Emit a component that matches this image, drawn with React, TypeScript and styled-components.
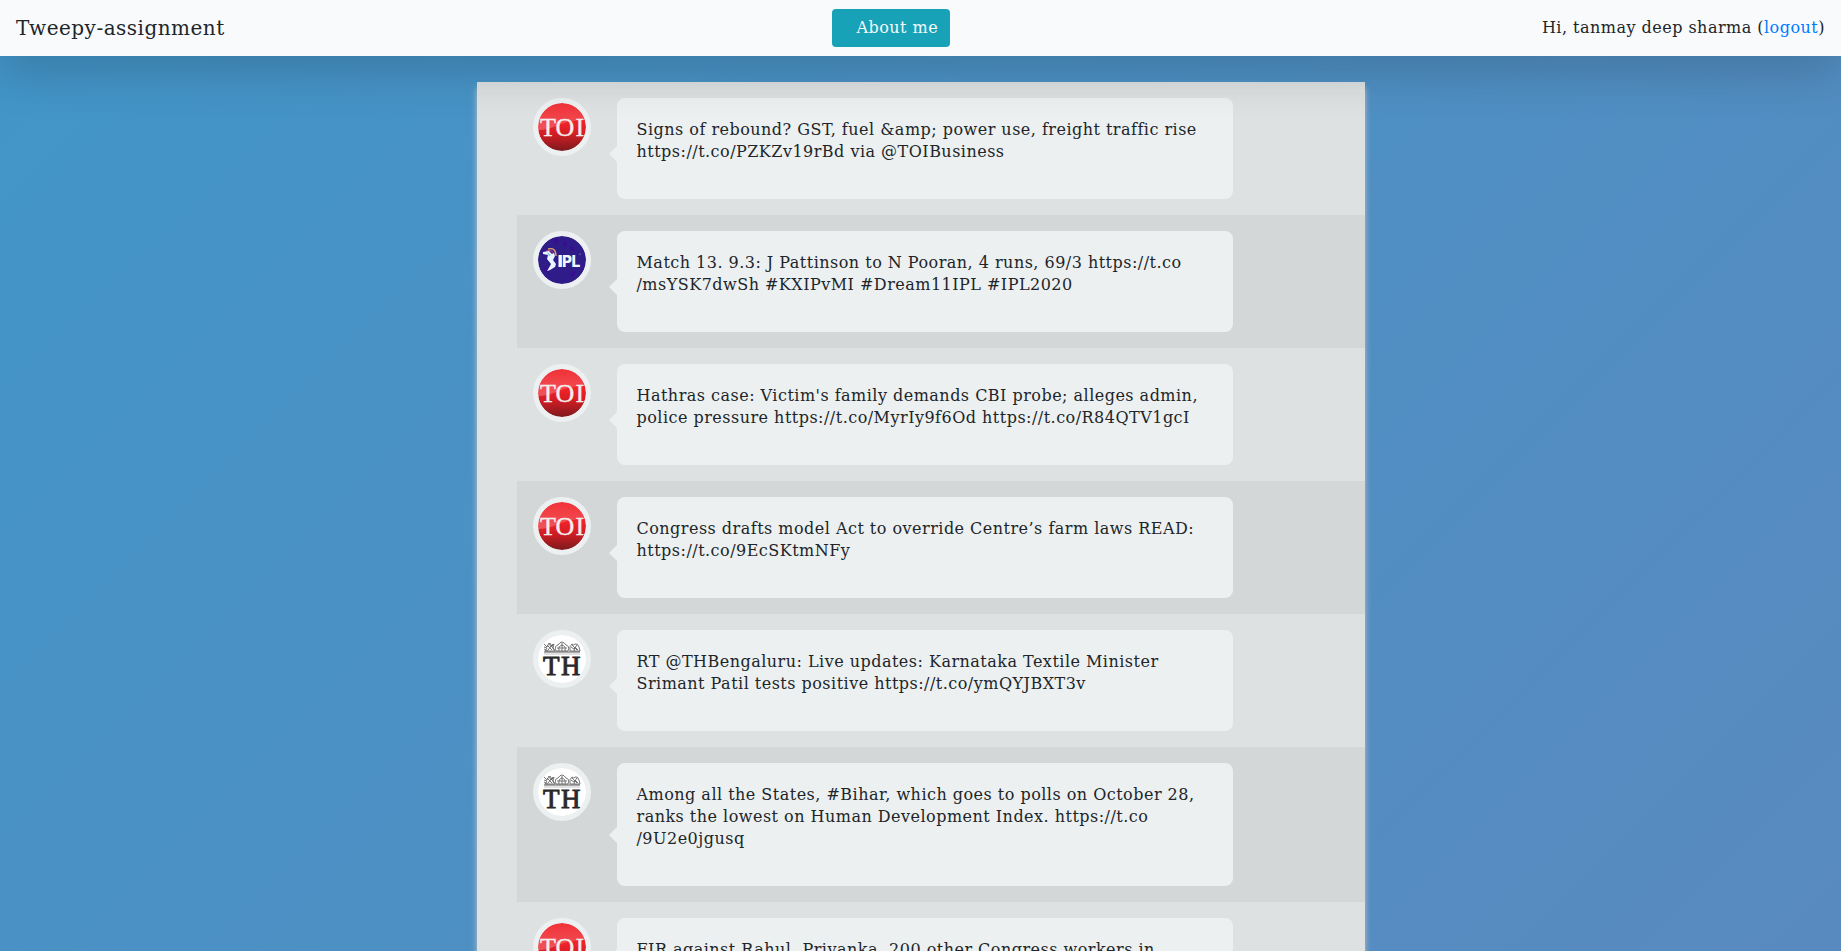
import React from 'react';
import styled, { createGlobalStyle } from 'styled-components';

const GlobalStyle = createGlobalStyle`
  *, *::before, *::after { box-sizing: border-box; }
  html { min-height: 100%; }
  body {
    margin: 0;
    min-height: 100vh;
    font-family: "DejaVu Serif", serif;
    font-size: 16px;
    line-height: 22px;
    letter-spacing: 0.03em;
    color: #212529;
    background: linear-gradient(135deg, #4295c8 0%, #598abf 100%) fixed;
  }
`;

const Navbar = styled.nav`
  position: sticky;
  top: 0;
  z-index: 10;
  display: flex;
  align-items: center;
  justify-content: space-between;
  min-height: 56px;
  padding: 8px 16px;
  line-height: 24px;
  background: #f8fafc;
  box-shadow: 0 16px 48px rgba(0, 0, 0, 0.175);
`;

const Brand = styled.a`
  margin-right: 16px;
  font-size: 20px;
  line-height: 30px;
  color: #212529;
  text-decoration: none;
  white-space: nowrap;
`;

const AboutButton = styled.button`
  padding: 7px 12px 7px 24px;
  border: 0;
  border-radius: 4px;
  background: #17a2b8;
  color: #f8fafc;
  font: inherit;
  letter-spacing: inherit;
  white-space: nowrap;
  cursor: pointer;
`;

const Greeting = styled.span`
  text-align: right;
`;

const LogoutLink = styled.a`
  color: #007bff;
  text-decoration: none;
`;

const Feed = styled.main`
  max-width: 888px;
  margin: 26px auto 0;
  padding-left: 40px;
  background: #dde1e2;
  box-shadow: 0 6px 6px #bdc3c7;
`;

const TweetList = styled.ul`
  margin: 0;
  padding: 0;
  list-style: none;
`;

const TweetRow = styled.li`
  display: flex;
  align-items: flex-start;
  gap: 26px;
  padding: 16px;

  &:nth-child(even) { background: #d3d7d8; }
`;

const Avatar = styled.svg`
  flex: none;
  width: 58px;
  height: 58px;
  border: 5px solid #ecf0f1;
  border-radius: 50%;
  background: #ecf0f1;
`;

const Bubble = styled.p`
  position: relative;
  flex: 1;
  min-width: 0;
  max-width: 616px;
  margin: 0;
  padding: 21px 20px 36px;
  border-radius: 8px;
  background: #ecf0f1;
  overflow-wrap: break-word;

  &::before {
    content: "";
    position: absolute;
    top: calc(75% - 28px);
    right: 100%;
    border: 8px solid transparent;
    border-left-width: 0;
    border-right-color: #ecf0f1;
  }
`;

const UrlPart = styled.span`
  white-space: nowrap;
`;

type Source = 'toi' | 'ipl' | 'hindu';

function ToiLogo() {
  return (
    <Avatar viewBox="0 0 48 48" role="img" aria-label="Times of India">
      <defs>
        <linearGradient id="toi-red" x1="0" y1="0" x2="0" y2="1">
          <stop offset="0" stopColor="#f0292f" />
          <stop offset="0.45" stopColor="#ee2229" />
          <stop offset="0.62" stopColor="#d81d24" />
          <stop offset="1" stopColor="#7d1a1d" />
        </linearGradient>
        <linearGradient id="toi-shine" x1="0" y1="0" x2="0" y2="1">
          <stop offset="0" stopColor="#fff" stopOpacity="0.04" />
          <stop offset="1" stopColor="#fff" stopOpacity="0.24" />
        </linearGradient>
        <clipPath id="toi-clip"><circle cx="24" cy="24" r="24" /></clipPath>
      </defs>
      <g clipPath="url(#toi-clip)">
        <rect width="48" height="48" fill="url(#toi-red)" />
        <path d="M0 0H48V17Q30 17 18 23Q9 27 0 27Z" fill="url(#toi-shine)" />
        <g fontFamily="Liberation Serif" fontSize="26" letterSpacing="0" fill="#f3eeee" stroke="#f3eeee" strokeWidth="0.4">
          <text x="2" y="33">T</text>
          <text x="17.5" y="33">O</text>
          <text x="37.5" y="33">I</text>
        </g>
      </g>
    </Avatar>
  );
}

function IplLogo() {
  return (
    <Avatar viewBox="0 0 48 48" role="img" aria-label="Indian Premier League">
      <circle cx="24" cy="24" r="24" fill="#2f1c88" />
      <g fill="#3f0597" opacity="0.7">
        <path d="M15 3l4-1 1 5-3 2zM26 5l3 1-1 5-3-1zM6 15l4-3-1 5zM33 9l3 2-1 4-3-2zM8 31l3 2-1 4-4-3zM33 36l5-1-2 5-4 1z" />
      </g>
      <path d="M10 13Q18 11 18 20" fill="none" stroke="#e0a070" strokeWidth="1.4" />
      <path d="M8 15Q15 13 16 19" fill="none" stroke="#c9518b" strokeWidth="1" />
      <path d="M5 16l6-1 3 3 2-1 1 3-2 4 3 4-1 3-5 3-3 1 3-5 1-2-4-5 1-4-5-1z" fill="#eaf6ff" />
      <path d="M9 16l4 3-2 1z" fill="#84b9dc" />
      <g fill="#f1f7ff">
        <rect x="20.5" y="19" width="3.4" height="12" />
        <text x="23.5" y="31" fontFamily="DejaVu Sans Condensed, Liberation Sans" fontWeight="700" fontSize="16" letterSpacing="0">
          P
        </text>
        <text x="33" y="31" fontFamily="DejaVu Sans Condensed, Liberation Sans" fontWeight="700" fontSize="16" letterSpacing="0">
          L
        </text>
      </g>
      <circle cx="42" cy="18" r="0.6" fill="#b9b3e4" />
    </Avatar>
  );
}

function HinduLogo() {
  return (
    <Avatar viewBox="0 0 48 48" role="img" aria-label="The Hindu">
      <circle cx="24" cy="24" r="24" fill="#fff" />
      <g fill="none" stroke="#666" strokeWidth="0.9">
        <path d="M6 9l3 3 2-4 2 4 3-3-1 4 2 3H7l2-3-3-1M9 10l5 5M15 9l-5 6M6 14l4 2M12 8l4 7" />
        <path d="M18 16q-2-5 2-6 2-3 4-3t4 3q4 1 2 6zM21 16q-1-5 3-6 4 1 3 6M24 8v8M19 13h10" />
        <path d="M32 16q-1-5 2-7 2 2 3 0 3-1 4 3l1 4zM33 12l3 2 3-4M36 16l1-4 3 3M34 10l5 5" />
        <path d="M6 17H42" strokeWidth="1" stroke="#555" />
      </g>
      <path d="M6 19H42" stroke="#c4c4c4" strokeWidth="1" />
      <g fontFamily="Liberation Serif" fontSize="27" letterSpacing="0" fill="#29292b" stroke="#29292b" strokeWidth="0.9">
        <text x="5" y="39.5">T</text>
        <text x="23" y="39.5">H</text>
      </g>
    </Avatar>
  );
}

const logos: Record<Source, () => React.JSX.Element> = {
  toi: ToiLogo,
  ipl: IplLogo,
  hindu: HinduLogo,
};

const tweets: { source: Source; body: React.ReactNode }[] = [
  {
    source: 'toi',
    body: 'Signs of rebound? GST, fuel &amp; power use, freight traffic rise https://t.co/PZKZv19rBd via @TOIBusiness',
  },
  {
    source: 'ipl',
    body: (
      <>
        Match 13. 9.3: J Pattinson to N Pooran, 4 runs, 69/3 https://t.co
        <wbr />
        <UrlPart>/msYSK7dwSh</UrlPart> #KXIPvMI #Dream11IPL #IPL2020
      </>
    ),
  },
  {
    source: 'toi',
    body: "Hathras case: Victim's family demands CBI probe; alleges admin, police pressure https://t.co/MyrIy9f6Od https://t.co/R84QTV1gcI",
  },
  {
    source: 'toi',
    body: 'Congress drafts model Act to override Centre’s farm laws READ: https://t.co/9EcSKtmNFy',
  },
  {
    source: 'hindu',
    body: 'RT @THBengaluru: Live updates: Karnataka Textile Minister Srimant Patil tests positive https://t.co/ymQYJBXT3v',
  },
  {
    source: 'hindu',
    body: (
      <>
        Among all the States, #Bihar, which goes to polls on October 28, ranks the lowest on Human
        Development Index. https://t.co
        <wbr />
        <UrlPart>/9U2e0jgusq</UrlPart>
      </>
    ),
  },
  {
    source: 'toi',
    body: 'FIR against Rahul, Priyanka, 200 other Congress workers in',
  },
];

export default function App() {
  return (
    <>
      <GlobalStyle />
      <Navbar>
        <Brand href="#">Tweepy-assignment</Brand>
        <AboutButton type="button">About me</AboutButton>
        <Greeting>
          Hi, tanmay deep sharma (<LogoutLink href="#logout">logout</LogoutLink>)
        </Greeting>
      </Navbar>
      <Feed>
        <TweetList>
          {tweets.map(({ source, body }, index) => {
            const Logo = logos[source];
            return (
              <TweetRow key={index}>
                <Logo />
                <Bubble>{body}</Bubble>
              </TweetRow>
            );
          })}
        </TweetList>
      </Feed>
    </>
  );
}
